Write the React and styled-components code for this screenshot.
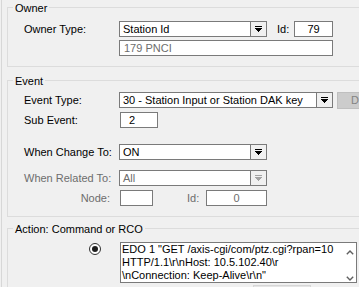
import React from "react"
import styled, { createGlobalStyle } from "styled-components"

const GlobalStyle = createGlobalStyle`
  *, *::before, *::after {
    box-sizing: border-box;
  }
  html, body {
    margin: 0;
    padding: 0;
    overflow: hidden;
    background: #f0f0f0;
  }
  body {
    font-family: "Liberation Sans", Arial, sans-serif;
    font-size: 11px;
    color: #000;
  }
`

const Page = styled.div`
  width: 420px;
  height: 320px;
  margin-left: 1px;
  padding-left: 5px;
  border-left: 1px solid #d7d7d7;
  display: flex;
  flex-direction: column;
`

const Group = styled.fieldset`
  margin: ${p => p.$mt || 0}px 0 0;
  padding: 0;
  min-width: 0;
  border: 1px solid #dcdcdc;
`

const Legend = styled.legend`
  margin-left: 5px;
  padding: 2px 2px 0;
  line-height: 13px;
`

const GroupBody = styled.div`
  display: flex;
  flex-direction: column;
  padding: ${p => p.$pt}px 0 ${p => p.$pb}px 16px;
`

const Row = styled.div`
  display: flex;
  align-items: flex-start;
  height: ${p => p.$h || 16}px;
  margin-top: ${p => p.$gap || 0}px;
`

const Label = styled.div`
  flex: none;
  width: ${p => p.$w || 95}px;
  margin-left: ${p => p.$ml || 0}px;
  padding-right: ${p => p.$pr || 0}px;
  line-height: 16px;
  text-align: ${p => (p.$right ? "right" : "left")};
  color: ${p => (p.$disabled ? "#6d6d6d" : "#000")};
  white-space: nowrap;
`

const TextBox = styled.div`
  flex: none;
  width: ${p => p.$w}px;
  height: 16px;
  margin-left: ${p => p.$ml || 0}px;
  padding-left: ${p => (p.$pl === undefined ? 3 : p.$pl)}px;
  border: 1px solid #7a7a7a;
  background: #fff;
  line-height: 14px;
  text-align: ${p => p.$align || "left"};
  color: ${p => (p.$disabled ? "#6d6d6d" : "#000")};
  white-space: nowrap;
  overflow: hidden;
`

const Combo = styled.div`
  flex: none;
  display: flex;
  width: ${p => p.$w}px;
  height: 16px;
  border: 1px solid #7a7a7a;
  background: #fff;
`

const ComboText = styled.div`
  flex: 1;
  padding-left: 3px;
  line-height: 14px;
  color: ${p => (p.$disabled ? "#6d6d6d" : "#000")};
  white-space: nowrap;
  overflow: hidden;
`

const DropButton = styled.div`
  flex: none;
  width: 16px;
  border-left: 1px solid #7a7a7a;
  background: #f0f0f0;
  display: flex;
  align-items: center;
  justify-content: center;
`

const SideButton = styled.div`
  flex: none;
  width: 80px;
  height: 17px;
  margin-left: 4px;
  padding-left: 13px;
  background: #cccccc;
  border: 1px solid #bfbfbf;
  color: #838383;
  line-height: 15px;
  white-space: nowrap;
`

const RadioCell = styled.div`
  flex: none;
  width: 96px;
  padding: 1px 0 0 65px;
`

const Radio = styled.div`
  width: 12px;
  height: 12px;
  border: 1px solid #333;
  border-radius: 50%;
  background: #fff;
  display: flex;
  align-items: center;
  justify-content: center;

  &::after {
    content: "";
    width: 6px;
    height: 6px;
    border-radius: 50%;
    background: #1e1e1e;
  }
`

const Memo = styled.div`
  flex: none;
  display: flex;
  width: 237px;
  height: 41px;
  border: 1px solid #7a7a7a;
  background: #fff;
`

const MemoText = styled.div`
  flex: 1;
  padding-left: 1px;
  line-height: 13px;
  white-space: nowrap;
  overflow: hidden;
`

const ScrollBar = styled.div`
  flex: none;
  width: 17px;
  padding: 7px 0 1px 4px;
  display: flex;
  flex-direction: column;
  justify-content: space-between;
  align-items: center;
`

const BottomButton = styled.div`
  width: 58px;
  height: 23px;
  margin: 2px 0 0 229px;
  background: #e5e5e5;
  border: 1px solid #d6d6d6;
`

const Arrow = ({ disabled }) => (
  <svg width="7" height="6" viewBox="0 0 7 6" shapeRendering="crispEdges">
    <g fill={disabled ? "#a3a3a3" : "#000"}>
      <rect x="0" y="0" width="7" height="1" />
      <rect x="0" y="2" width="7" height="1" />
      <rect x="1" y="3" width="5" height="1" />
      <rect x="2" y="4" width="3" height="1" />
      <rect x="3" y="5" width="1" height="1" />
    </g>
  </svg>
)

const Chevron = ({ down }) => (
  <svg width="8" height="5" viewBox="0 0 8 5">
    <polyline
      points={down ? "0.8,0.8 4,4 7.2,0.8" : "0.8,4.2 4,1 7.2,4.2"}
      fill="none"
      stroke="#606060"
      strokeWidth="1.4"
    />
  </svg>
)

const ComboBox = ({ width, value, disabled }) => (
  <Combo $w={width}>
    <ComboText $disabled={disabled}>{value}</ComboText>
    <DropButton>
      <Arrow disabled={disabled} />
    </DropButton>
  </Combo>
)

export default function App() {
  return (
    <>
      <GlobalStyle />
      <Page>
        <Group>
          <Legend>Owner</Legend>
          <GroupBody $pt={6} $pb={10}>
            <Row>
              <Label>Owner Type:</Label>
              <ComboBox width={148} value="Station Id" />
              <Label $w={17} $ml={10}>Id:</Label>
              <TextBox $w={39} $pl={0} $align="center">79</TextBox>
            </Row>
            <Row $gap={3}>
              <Label />
              <TextBox $w={214} $pl={4} $disabled>179 PNCI</TextBox>
            </Row>
          </GroupBody>
        </Group>

        <Group $mt={6}>
          <Legend>Event</Legend>
          <GroupBody $pt={4} $pb={10}>
            <Row>
              <Label>Event Type:</Label>
              <ComboBox width={214} value="30 - Station Input or Station DAK key" />
              <SideButton>D</SideButton>
            </Row>
            <Row $gap={4}>
              <Label>Sub Event:</Label>
              <TextBox $w={38} $ml={1} $pl={8}>2</TextBox>
            </Row>
            <Row $gap={16}>
              <Label>When Change To:</Label>
              <ComboBox width={148} value="ON" />
            </Row>
            <Row $gap={10}>
              <Label $disabled>When Related To:</Label>
              <ComboBox width={148} value="All" disabled />
            </Row>
            <Row $gap={4}>
              <Label $right $pr={9} $disabled>Node:</Label>
              <TextBox $w={33} $ml={1} />
              <Label $w={19} $ml={34} $disabled>Id:</Label>
              <TextBox $w={61} $pl={0} $align="center" $disabled>0</TextBox>
            </Row>
          </GroupBody>
        </Group>

        <Group $mt={4}>
          <Legend>Action: Command or RCO</Legend>
          <GroupBody $pt={6} $pb={10}>
            <Row $h={41}>
              <RadioCell>
                <Radio />
              </RadioCell>
              <Memo>
                <MemoText>
                  <div>EDO 1 "GET /axis-cgi/com/ptz.cgi?rpan=10</div>
                  <div>HTTP/1.1\r\nHost: 10.5.102.40\r</div>
                  <div>\nConnection: Keep-Alive\r\n"</div>
                </MemoText>
                <ScrollBar>
                  <Chevron />
                  <Chevron down />
                </ScrollBar>
              </Memo>
            </Row>
            <BottomButton />
          </GroupBody>
        </Group>
      </Page>
    </>
  )
}
